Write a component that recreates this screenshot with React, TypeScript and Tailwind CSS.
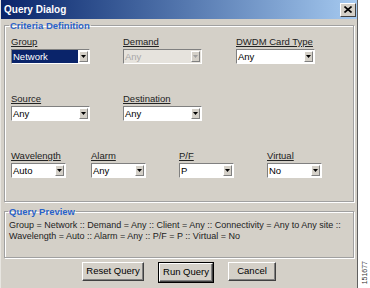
type ComboProps = {
  value: string;
  wide?: boolean;
  selected?: boolean;
  disabled?: boolean;
};

function Combo({ value, wide, selected, disabled }: ComboProps) {
  return (
    <div
      className={`flex h-[15px] border border-t-[#808080] border-l-[#808080] border-b-white border-r-white ${
        wide ? "w-[79px]" : "w-[55px]"
      }`}
    >
      <div
        className={`flex flex-1 items-center pl-[1px] text-[9.5px] leading-none ${
          selected ? "bg-[#0a246a] text-white" : disabled ? "bg-[#e6e3dd] text-[#a8a8a8]" : "bg-white text-black"
        }`}
      >
        {value}
      </div>
      <div className={`flex w-[11px] items-center justify-center ${disabled ? "bg-[#e6e3dd]" : "bg-white"}`}>
        <div className="flex h-[11px] w-[9px] items-center justify-center border border-t-white border-l-white border-b-[#808080] border-r-[#808080] bg-[#d4d0c8]">
          <svg width="5" height="3" viewBox="0 0 5 3">
            <path d="M0 0h5L2.5 3z" fill={disabled ? "#a0a0a0" : "#000"} />
          </svg>
        </div>
      </div>
    </div>
  );
}

function Field({ label, children, className }: { label: string; children: React.ReactNode; className: string }) {
  return (
    <div className={className}>
      <div className="h-[14px] text-[9.5px] leading-[13px] text-[#222] underline underline-offset-1">{label}</div>
      {children}
    </div>
  );
}

function Button({ label, def, w }: { label: string; def?: boolean; w: string }) {
  return (
    <div className={`${def ? "border border-black" : ""}`}>
      <div
        className={`flex h-[19px] ${w} items-center justify-center border border-t-white border-l-white border-b-[#404040] border-r-[#404040] bg-[#d4d0c8] text-[9.5px] shadow-[inset_-1px_-1px_0_#808080]`}
      >
        {label}
      </div>
    </div>
  );
}

export default function App() {
  return (
    <div className="flex h-[288px] w-[370px] bg-white font-['Liberation_Sans',Arial,sans-serif] text-black">
      <div className="flex h-[288px] w-[358px] flex-col border-l border-r border-l-[#e8e6e1] border-r-[#606060] bg-[#d4d0c8]">
        <div className="flex h-[19px] items-center justify-between bg-gradient-to-r from-[#0a246a] to-[#a6caf0] pl-[3px] pr-[1px]">
          <span className="text-[10px] font-bold text-white">Query Dialog</span>
          <div className="flex h-[14px] w-[16px] items-center justify-center border border-t-white border-l-white border-b-[#404040] border-r-[#404040] bg-[#d4d0c8]">
            <svg width="8" height="7" viewBox="0 0 8 7">
              <path d="M0.5 0.5l7 6M7.5 0.5l-7 6" stroke="#000" strokeWidth="1.6" />
            </svg>
          </div>
        </div>

        <div className="flex flex-1 flex-col px-[3px]">
          <fieldset className="h-[183px] border border-[#a0a0a0] px-[6px] shadow-[inset_1px_1px_0_#fff,1px_1px_0_#fff]">
            <legend className="ml-[-2px] px-[1px] text-[9.5px] font-bold leading-[13px] text-[#2a62c9]">
              Criteria Definition
            </legend>
            <div className="mt-[3px] flex">
              <Field label="Group" className="w-[112px]">
                <Combo value="Network" wide selected />
              </Field>
              <Field label="Demand" className="w-[113px]">
                <Combo value="Any" wide disabled />
              </Field>
              <Field label="DWDM Card Type" className="w-[100px]">
                <Combo value="Any" wide />
              </Field>
            </div>
            <div className="mt-[28px] flex">
              <Field label="Source" className="w-[112px]">
                <Combo value="Any" wide />
              </Field>
              <Field label="Destination" className="w-[100px]">
                <Combo value="Any" wide />
              </Field>
            </div>
            <div className="mt-[28px] flex">
              <Field label="Wavelength" className="w-[80px]">
                <Combo value="Auto" />
              </Field>
              <Field label="Alarm" className="w-[88px]">
                <Combo value="Any" />
              </Field>
              <Field label="P/F" className="w-[88px]">
                <Combo value="P" />
              </Field>
              <Field label="Virtual" className="w-[80px]">
                <Combo value="No" />
              </Field>
            </div>
          </fieldset>

          <fieldset className="mt-[3px] h-[53px] border border-[#a0a0a0] px-[4px] shadow-[inset_1px_1px_0_#fff,1px_1px_0_#fff]">
            <legend className="ml-[-1px] px-[1px] text-[9.5px] font-bold leading-[13px] text-[#2a62c9]">
              Query Preview
            </legend>
            <div className="mt-[2px] whitespace-nowrap text-[9px] leading-[11px] text-[#222]">
              Group = Network :: Demand = Any :: Client = Any :: Connectivity = Any to Any site ::
              <br />
              Wavelength = Auto :: Alarm = Any :: P/F = P :: Virtual = No
            </div>
          </fieldset>

          <div className="mt-[4px] flex justify-center gap-[14px]">
            <Button label="Reset Query" w="w-[62px]" />
            <Button label="Run Query" def w="w-[54px]" />
            <Button label="Cancel" w="w-[48px]" />
          </div>
        </div>
      </div>
      <div className="flex flex-1 items-end justify-center pb-[4px]">
        <span className="rotate-180 text-[7px] leading-none text-[#333] [writing-mode:vertical-rl]">151677</span>
      </div>
    </div>
  );
}
